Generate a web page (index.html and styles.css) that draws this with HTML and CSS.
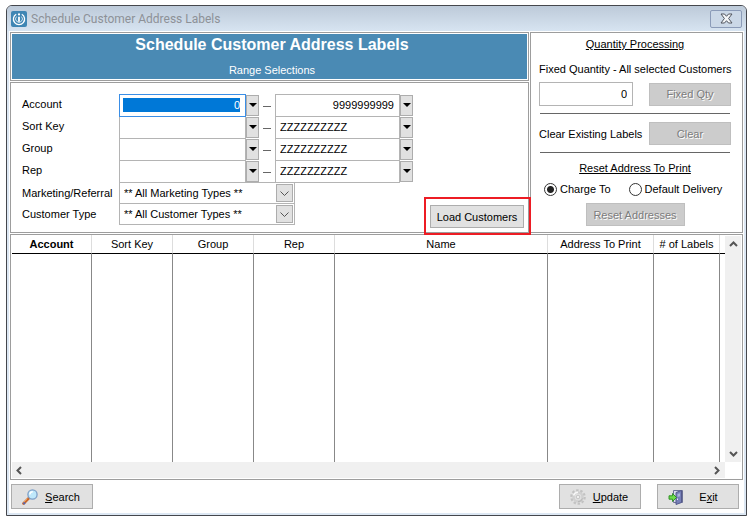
FILE: index.html
```
<!DOCTYPE html>
<html lang="en">
<head>
  <meta charset="UTF-8" />
  <meta name="viewport" content="width=device-width, initial-scale=1.0" />
  <title>Schedule Customer Address Labels</title>
  <link rel="stylesheet" href="styles.css">
</head>
<body>
  <div class="window">
    <header class="titlebar">
      <svg class="app-icon" width="16" height="16" viewBox="0 0 16 16">
        <rect width="16" height="16" rx="2" fill="#3f86b4" />
        <g fill="none" stroke="#fff">
          <path d="M5.2 3.2a5.6 5.6 0 1 0 5.6 0" stroke-width="1.3" />
          <path d="M5.5 5.6a3.4 3.4 0 1 0 5 0" stroke-width="1" opacity=".75" />
          <path d="M8 5.8v5" stroke-width="1.8" />
        </g>
        <circle cx="8" cy="3.4" r="1.1" fill="#fff" />
      </svg>
      <span class="titlebar-text">Schedule Customer Address Labels</span>
      <button class="close" aria-label="Close">
        <svg width="13" height="11" viewBox="0 0 13 11">
          <path d="M1 1h3.5l2 2.3L8.500 1H12L8.600 5.500 12 10H8.500l-2-2.300L4.500 10H1l3.400-4.500z" fill="#f4f6f8" stroke="#50545e" />
        </svg>
      </button>
    </header>

    <main class="content">
      <div class="top">
        <div class="left">
          <div class="panel banner">
            <div class="banner-fill">
              <h1>Schedule Customer Address Labels</h1>
              <p>Range Selections</p>
            </div>
          </div>

          <form class="panel ranges">
            <div class="row">
              <label for="account-from">Account</label>
              <input class="from number selected" id="account-from" type="text" value="0" />
              <button type="button" class="lookup" aria-label="Look up first account"></button>
              <span class="dash"></span>
              <input class="to number" type="text" value="9999999999" aria-label="Account to" />
              <button type="button" class="lookup" aria-label="Look up last account"></button>
            </div>
            <div class="row">
              <label for="sort-from">Sort Key</label>
              <input class="from" id="sort-from" type="text" />
              <button type="button" class="lookup" aria-label="Look up first sort key"></button>
              <span class="dash"></span>
              <input class="to" type="text" value="ZZZZZZZZZZ" aria-label="Sort key to" />
              <button type="button" class="lookup" aria-label="Look up last sort key"></button>
            </div>
            <div class="row">
              <label for="group-from">Group</label>
              <input class="from" id="group-from" type="text" />
              <button type="button" class="lookup" aria-label="Look up first group"></button>
              <span class="dash"></span>
              <input class="to" type="text" value="ZZZZZZZZZZ" aria-label="Group to" />
              <button type="button" class="lookup" aria-label="Look up last group"></button>
            </div>
            <div class="row">
              <label for="rep-from">Rep</label>
              <input class="from" id="rep-from" type="text" />
              <button type="button" class="lookup" aria-label="Look up first rep"></button>
              <span class="dash"></span>
              <input class="to" type="text" value="ZZZZZZZZZZ" aria-label="Rep to" />
              <button type="button" class="lookup" aria-label="Look up last rep"></button>
            </div>
            <div class="row row-select">
              <label for="marketing">Marketing/Referral</label>
              <div class="select">
                <select id="marketing"><option>** All Marketing Types **</option></select>
                <svg class="select-arrow" viewBox="0 0 17 18"><rect x=".5" y=".5" width="16" height="17" /><path d="M4.500 7.500l4 4 4-4" /></svg>
              </div>
            </div>
            <div class="row row-select">
              <label for="customer-type">Customer Type</label>
              <div class="select">
                <select id="customer-type"><option>** All Customer Types **</option></select>
                <svg class="select-arrow" viewBox="0 0 17 18"><rect x=".5" y=".5" width="16" height="17" /><path d="M4.500 7.500l4 4 4-4" /></svg>
              </div>
            </div>
            <div class="load">
              <button type="button" class="btn">Load Customers</button>
            </div>
          </form>
        </div>

        <section class="panel quantity">
          <h2>Quantity Processing</h2>
          <label class="fixed-label" for="fixed-qty">Fixed Quantity - All selected Customers</label>
          <div class="pair">
            <input class="number" id="fixed-qty" type="text" value="0" />
            <button class="btn" disabled>Fixed Qty</button>
          </div>
          <hr />
          <div class="pair">
            <span>Clear Existing Labels</span>
            <button class="btn" disabled>Clear</button>
          </div>
          <hr />
          <h2>Reset Address To Print</h2>
          <div class="radios">
            <label><input type="radio" name="address" checked />Charge To</label>
            <label><input type="radio" name="address" />Default Delivery</label>
          </div>
          <button class="btn reset" disabled>Reset Addresses</button>
        </section>
      </div>

      <div class="panel list">
        <table>
          <colgroup>
            <col class="col-account">
            <col class="col-code">
            <col class="col-code">
            <col class="col-code">
            <col>
            <col class="col-address">
            <col class="col-labels">
            <col class="col-end">
          </colgroup>
          <thead>
            <tr>
              <th class="sorted">Account</th>
              <th>Sort Key</th>
              <th>Group</th>
              <th>Rep</th>
              <th>Name</th>
              <th>Address To Print</th>
              <th># of Labels</th>
              <th></th>
            </tr>
          </thead>
          <tbody>
            <tr><td></td><td></td><td></td><td></td><td></td><td></td><td></td><td></td></tr>
          </tbody>
        </table>
        <div class="scroll vertical">
          <svg width="9" height="6" viewBox="0 0 9 6"><path d="M1 5l3.500-3.500L8 5" /></svg>
          <svg width="9" height="6" viewBox="0 0 9 6"><path d="M1 1l3.500 3.500L8 1" /></svg>
        </div>
        <div class="scroll horizontal">
          <svg width="6" height="9" viewBox="0 0 6 9"><path d="M5 1L1.500 4.500 5 8" /></svg>
          <svg width="6" height="9" viewBox="0 0 6 9"><path d="M1 1l3.500 3.500L1 8" /></svg>
        </div>
      </div>

      <footer class="actions">
        <button class="btn action" accesskey="s">
          <svg width="16" height="16" viewBox="0 0 16 16">
            <path d="M1.500 14.500L7 9" stroke="#c9662a" stroke-width="2.600" stroke-linecap="round" />
            <path d="M1.500 13.500L5.500 9.600" stroke="#f3a55d" stroke-width="1" />
            <path d="M1.500 15L3 13.500" stroke="#5a67b0" stroke-width="2" />
            <circle cx="10.500" cy="5.500" r="4.600" fill="#bfe8fb" stroke="#7d9fc8" stroke-width="1.300" />
            <path d="M7.800 5.500a3 3 0 0 1 3-2.800" fill="none" stroke="#fff" stroke-width="1.400" />
          </svg>
          <span><u>S</u>earch</span>
        </button>
        <button class="btn action push" accesskey="u">
          <svg width="16" height="16" viewBox="0 0 16 16">
            <circle cx="8" cy="8" r="6.600" fill="none" stroke="#c2c2c2" stroke-width="2.400" stroke-dasharray="2.400 1.750" />
            <circle cx="8" cy="8" r="4.500" fill="#e2e2e2" stroke="#d0d0d0" stroke-width="2.500" />
            <path d="M3.500 6.500A4.800 4.800 0 0 1 8 3.200" fill="none" stroke="#f8f8f8" stroke-width="1.600" />
            <path d="M12.500 9.500A4.800 4.800 0 0 1 8 12.800" fill="none" stroke="#b5b5b5" />
            <circle cx="8" cy="8" r="1.800" fill="#efefef" stroke="#bbb" stroke-width=".8" />
          </svg>
          <span><u>U</u>pdate</span>
        </button>
        <button class="btn action" accesskey="x">
          <svg width="16" height="16" viewBox="0 0 16 16">
            <path d="M5.500 1.500h9v12h-9z" fill="#dce0ee" stroke="#6c7196" />
            <path d="M8 3.500l5.500-2v12L8 15.500z" fill="#7780b8" stroke="#54598c" />
            <path d="M9.500 5l2.500-.8v3L9.500 8z" fill="#a9b3dc" />
            <path d="M9.500 9.500v1.500" stroke="#e4e7f6" />
            <path d="M1 6.800h3.500V4.500L8.500 8.500l-4 4v-2.300H1z" fill="#6fdc4c" stroke="#278a1e" stroke-width=".9" />
          </svg>
          <span>E<u>x</u>it</span>
        </button>
      </footer>
    </main>
  </div>
</body>
</html>
```
FILE: styles.css
```
* {
  box-sizing: border-box;
}
body {
  margin: 5px 4px 6px 6px;
  background: white;
  font-family: "Liberation Sans", Arial, sans-serif;
  font-size: 11px;
  line-height: 14px;
  color: black;
}
h1, h2, p {
  margin: 0;
}
input, select, button {
  font: inherit;
  color: inherit;
  margin: 0;
}
.window {
  border: 1px solid #45474d;
  border-radius: 6px 6px 0 0;
  background: #dce7f3;
  padding: 0 2px 2px;
}
.titlebar {
  display: flex;
  align-items: center;
  height: 25px;
  margin: 0 -2px;
  padding: 0 4px;
  border-radius: 5px 5px 0 0;
  background: linear-gradient(#bdcad9, #d7e4f1);
}
.titlebar-text {
  flex: 1;
  margin-left: 4px;
  font-family: Roboto, "Noto Sans", sans-serif;
  font-size: 12px;
  color: #8d9197;
}
.close {
  display: flex;
  align-items: center;
  justify-content: center;
  width: 32px;
  height: 18px;
  padding: 0;
  border: 1px solid #8b9bb8;
  border-radius: 2px;
  background: #cbd8e7;
}
.content {
  padding: 1px 1px 4px;
  background: white;
}
.panel {
  border: 1px solid #9d9d9d;
  background: white;
}
.top {
  display: flex;
  gap: 1px;
}
.left {
  flex: 1;
  display: flex;
  flex-direction: column;
  gap: 1px;
}
.banner {
  padding: 1px;
}
.banner-fill {
  padding: 1px 0 2px 5px;
  background: #4a8ab4;
  color: white;
  text-align: center;
}
.banner h1 {
  font-size: 16px;
  line-height: 20px;
}
.banner p {
  margin-top: 8px;
}

/* range selections */
.ranges {
  position: relative;
  flex: 1;
  padding: 11px 11px 7px;
}
.row {
  display: flex;
  align-items: center;
  height: 22px;
}
.row label {
  width: 97px;
  padding-bottom: 2px;
}
.row input {
  height: 23px;
  margin-bottom: -1px;
}
input[type="text"] {
  padding: 3px 5px 4px 4px;
  border: 1px solid #b4b4b4;
  border-radius: 0;
  background: white;
  outline: none;
}
.from {
  width: 127px;
}
.to {
  width: 125px;
}
.number {
  text-align: right;
}
.row input.selected {
  z-index: 1;
  padding: 3px 5px 4px 3px;
  border-color: #3a8ee6;
  background: #0078d7 content-box;
  color: white;
}
.lookup {
  display: flex;
  align-items: center;
  justify-content: center;
  width: 13px;
  height: 21px;
  padding: 0;
  border: 1px solid #adadad;
  background: #e1e1e1;
}
.lookup::before {
  content: "";
  border: 4px solid transparent;
  border-top-color: black;
  border-bottom: 0;
}
.dash {
  width: 8px;
  height: 1px;
  margin: 2px 4px 0;
  background: #666;
}
.row-select {
  height: 21px;
}
.row-select label {
  padding-bottom: 0;
}
.select {
  position: relative;
  width: 176px;
  height: 22px;
}
select {
  appearance: none;
  width: 100%;
  height: 22px;
  padding: 0 20px 0 4px;
  border: 1px solid #b4b4b4;
  border-radius: 0;
  background: white;
}
.select-arrow {
  position: absolute;
  top: 2px;
  right: 2px;
  width: 17px;
  height: 18px;
  fill: #e1e1e1;
  stroke: #adadad;
  pointer-events: none;
}
.select-arrow path {
  fill: none;
  stroke: #555;
}
.load {
  position: absolute;
  right: 4px;
  bottom: 4px;
  width: 94px;
}
.load .btn {
  width: 100%;
}
.load::after {
  content: "";
  position: absolute;
  inset: -8px -7px -7px -6px;
  border: 2px solid #ed1c24;
  pointer-events: none;
}
.btn {
  height: 23px;
  padding: 0;
  border: 1px solid #adadad;
  background: #e1e1e1;
}
.btn:disabled {
  border-color: #bfbfbf;
  background: #ccc;
  color: #7c7c7c;
  text-shadow: 1px 1px 0 white;
}

/* quantity processing */
.quantity {
  width: 213px;
  padding: 4px 11px 6px 8px;
}
.quantity h2 {
  font-size: 11px;
  font-weight: normal;
  text-align: center;
  text-decoration: underline;
}
.fixed-label {
  display: block;
  margin: 11px 0 6px;
  white-space: nowrap;
}
.pair {
  display: flex;
  justify-content: space-between;
  align-items: center;
}
.pair input {
  width: 94px;
  height: 24px;
}
.pair .btn {
  width: 82px;
}
.quantity hr {
  margin: 7px 1px 8px;
  border: 0;
  border-top: 1px solid #666;
}
.radios {
  display: flex;
  gap: 18px;
  margin: 7px 0 7px 5px;
}
.radios label {
  display: flex;
  align-items: center;
  gap: 3px;
  white-space: nowrap;
}
.radios input {
  appearance: none;
  width: 13px;
  height: 13px;
  border: 1px solid #333;
  border-radius: 50%;
  background: white;
}
.radios input:checked {
  background: radial-gradient(circle, #222 3px, white 4px);
}
.reset {
  display: block;
  width: 99px;
  margin: 0 auto;
}

/* customer list */
.list {
  display: grid;
  grid-template-columns: 1fr 16px;
  margin-top: 1px;
  padding: 0 1px 1px;
}
table {
  width: 100%;
  table-layout: fixed;
  border-collapse: separate;
  border-spacing: 0;
}
.col-account {
  width: 80px;
}
.col-code {
  width: 81px;
}
.col-address {
  width: 106px;
}
.col-labels {
  width: 66px;
}
.col-end {
  width: 5px;
}
th {
  height: 19px;
  padding: 0;
  border-right: 1px solid #ddd;
  border-bottom: 1px solid black;
  font-weight: normal;
}
th.sorted {
  font-weight: bold;
}
td {
  height: 208px;
  padding: 0;
  border-right: 1px solid #888;
}
th:last-child, td:last-child {
  border-right: 0;
}
.scroll {
  display: flex;
  justify-content: space-between;
  align-items: center;
  background: #f0f0f0;
}
.scroll svg {
  fill: none;
  stroke: #555;
  stroke-width: 2;
}
.vertical {
  flex-direction: column;
  margin-top: 1px;
  padding: 5px 0;
}
.horizontal {
  height: 16px;
  padding: 0 5px 0 4px;
}
.actions {
  display: flex;
  gap: 16px;
  margin-top: 4px;
  padding: 0 4px 0 1px;
}
.action {
  display: flex;
  align-items: center;
  width: 82px;
  height: 25px;
  padding: 0 5px 0 10px;
}
.action span {
  flex: 1;
  text-align: center;
}
.push {
  margin-left: auto;
}
```
